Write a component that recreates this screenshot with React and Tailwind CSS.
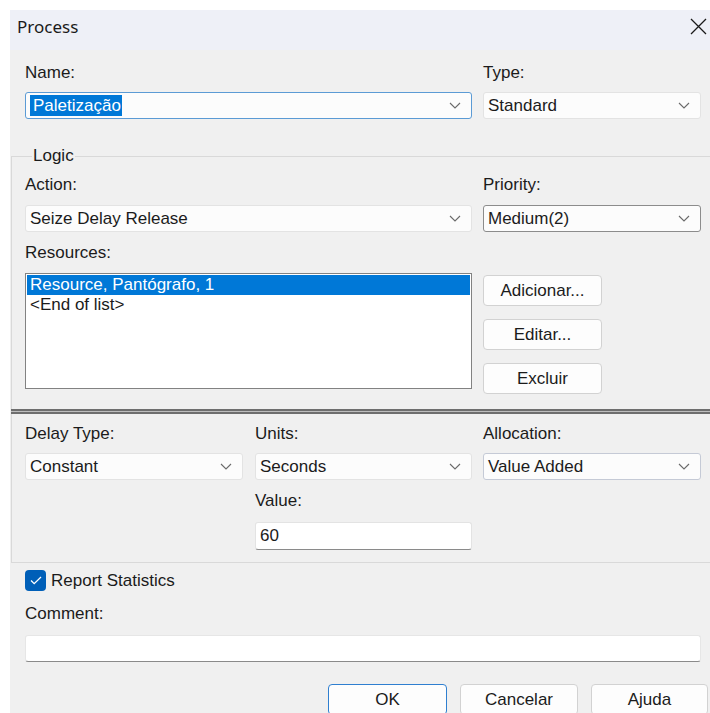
import React from 'react';

const font = "font-['Liberation_Sans',Arial,sans-serif]";

const Chevron = () => (
  <svg width="12" height="7" viewBox="0 0 12 7" className="shrink-0">
    <path d="M1 1l5 5 5-5" fill="none" stroke="#6a6a6a" strokeWidth="1.1" />
  </svg>
);

const Combo = ({ value, width, border = 'border-[#e3e3e3]', children }) => (
  <div className={`${width} h-[27px] flex items-center justify-between bg-[#fcfcfc] border ${border} rounded-[3px] pl-[4px] pr-[10px] shrink-0`}>
    <span className="leading-[18px] whitespace-nowrap">{children || value}</span>
    <Chevron />
  </div>
);

const Label = ({ children, className = '' }) => (
  <div className={`leading-[18px] h-[18px] whitespace-nowrap ${className}`}>{children}</div>
);

const Button = ({ children, width = 'w-[119px]', border = 'border-[#d2d2d2]' }) => (
  <button className={`${width} h-[31px] bg-[#fdfdfd] border ${border} rounded-[4px] text-[17px] leading-[18px] text-[#1b1b1b] shrink-0`}>
    {children}
  </button>
);

export default function App() {
  return (
    <div className={`w-[710px] h-[713px] bg-white overflow-hidden text-[17px] text-[#1b1b1b] ${font}`}>
      <div className="ml-[10px] mt-[10px] w-[710px] flex flex-col">
        {/* title bar */}
        <div className="h-[40px] bg-[#eef0f7] flex items-start justify-between pl-[7px] pr-[13px] pt-[6px]">
          <span className="font-['Noto_Sans',sans-serif] text-[17px] leading-[22px] text-[#1a1a1a]">Process</span>
          <svg width="17" height="17" viewBox="0 0 17 17" className="mt-[2px]">
            <path d="M1 1l15 15M16 1L1 16" stroke="#1a1a1a" strokeWidth="1.3" />
          </svg>
        </div>

        <div className="bg-[#f0f0f0] flex flex-col">
          {/* name / type */}
          <div className="flex gap-[11px] pl-[15px] pt-[14px]">
            <div className="flex flex-col gap-[10px]">
              <Label>Name:</Label>
              <Combo width="w-[447px]" border="border-[#5b9bd5]">
                <span className="bg-[#0078d7] text-white pl-[3px] pr-[1px] py-[1px]">Paletização</span>
              </Combo>
            </div>
            <div className="flex flex-col gap-[10px]">
              <Label>Type:</Label>
              <Combo width="w-[218px]" value="Standard" />
            </div>
          </div>

          {/* logic group */}
          <fieldset className="mt-[28px] ml-[1px] border-t border-l border-[#d9d9d9] pl-[13px] pb-[15px]">
            <legend className="ml-[7px] px-[1px] leading-[18px]">Logic</legend>
            <div className="flex gap-[11px] pt-[11px]">
              <div className="flex flex-col">
                <Label>Action:</Label>
                <div className="mt-[11px]">
                  <Combo width="w-[447px]" value="Seize Delay Release" />
                </div>
                <Label className="mt-[12px]">Resources:</Label>
                <div className="mt-[11px] w-[447px] h-[116px] bg-white border border-[#828282] p-[1px] flex flex-col">
                  <div className="bg-[#0078d7] text-white h-[20px] leading-[20px] pl-[3px]">Resource, Pantógrafo, 1</div>
                  <div className="h-[19px] leading-[19px] pl-[3px]">&lt;End of list&gt;</div>
                </div>
              </div>
              <div className="flex flex-col">
                <Label>Priority:</Label>
                <div className="mt-[11px]">
                  <Combo width="w-[218px]" border="border-[#8c8c8c]" value="Medium(2)" />
                </div>
                <div className="mt-[43px] flex flex-col gap-[13px]">
                  <Button>Adicionar...</Button>
                  <Button>Editar...</Button>
                  <Button>Excluir</Button>
                </div>
              </div>
            </div>
          </fieldset>

          {/* double rule under the logic group */}
          <div className="ml-[1px] h-[5px] border-y-2 border-[#6e6e6e] bg-[#bdbdbd]" />

          {/* delay group */}
          <div className="ml-[1px] border-l border-b border-[#d9d9d9] pl-[13px] pt-[11px] pb-[12px] flex gap-[12px]">
            <div className="flex flex-col gap-[10px]">
              <Label>Delay Type:</Label>
              <Combo width="w-[218px]" value="Constant" />
            </div>
            <div className="flex flex-col">
              <Label>Units:</Label>
              <div className="mt-[10px]">
                <Combo width="w-[217px]" value="Seconds" />
              </div>
              <Label className="mt-[12px]">Value:</Label>
              <div className="mt-[12px] w-[217px] h-[28px] bg-white border border-[#e3e3e3] border-b-[#8a8a8a] rounded-[3px] pl-[4px] flex items-center">
                60
              </div>
            </div>
            <div className="flex flex-col gap-[10px] ml-[-1px]">
              <Label>Allocation:</Label>
              <Combo width="w-[218px]" border="border-[#c5cad6]" value="Value Added" />
            </div>
          </div>

          {/* statistics and comment */}
          <div className="flex flex-col pl-[15px] pt-[7px]">
            <div className="flex items-center gap-[5px] h-[21px]">
              <div className="w-[21px] h-[21px] rounded-[4px] bg-[#005fb8] flex items-center justify-center">
                <svg width="12" height="9" viewBox="0 0 12 9">
                  <path d="M1 4.5l3.2 3.2L11 1" fill="none" stroke="white" strokeWidth="1.3" />
                </svg>
              </div>
              <span className="leading-[18px]">Report Statistics</span>
            </div>
            <Label className="mt-[14px]">Comment:</Label>
            <div className="mt-[12px] w-[676px] h-[27px] bg-white border border-[#e6e6e6] border-b-[#8a8a8a] rounded-[3px]" />
            <div className="mt-[22px] flex justify-end gap-[13px] pr-[12px] h-[31px]">
              <Button border="border-[#2f7fd0]">OK</Button>
              <Button width="w-[118px]">Cancelar</Button>
              <Button width="w-[117px]">Ajuda</Button>
            </div>
          </div>
        </div>
      </div>
    </div>
  );
}
